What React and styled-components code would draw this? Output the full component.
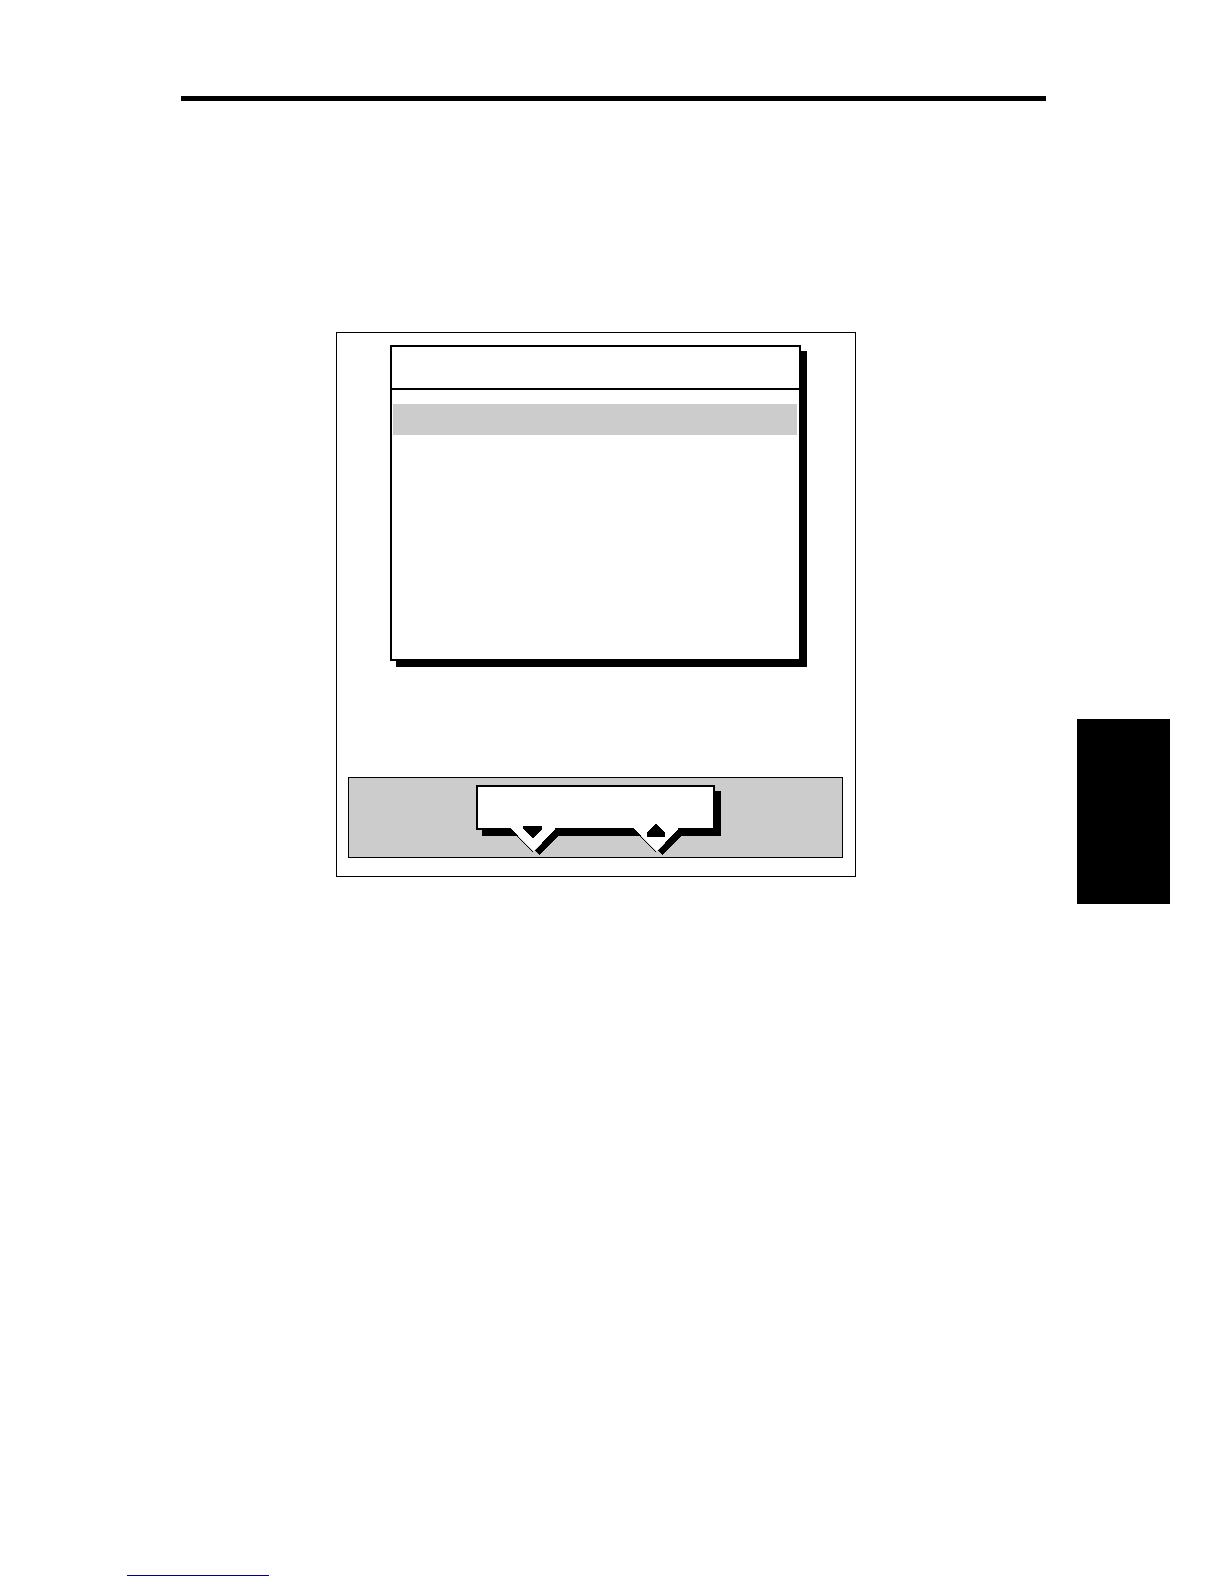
import styled, { createGlobalStyle } from "styled-components";

const rows = [1, 2, 3, 4, 5, 6, 7];

function KeyPointer({ direction, left }) {
	return (
		<PointerButton type="button" aria-label={direction} $left={left}>
			<svg width="50" height="32" shapeRendering="crispEdges" aria-hidden="true">
				<path d="M45 4 L51 4 L51 9 L29 31 L25 27 Z" fill="#000" />
				<path d="M0 4 H45 V5 L24 27 H23 Z" fill="#fff" />
				<path d="M7 12 L23 28" stroke="#000" fill="none" />
				{direction === "Down" ? (
					<path d="M13 2 H32 V5 L24 14 H22 L13 5 Z" fill="#000" />
				) : (
					<path d="M22 0 H24 L32 9 V13 H14 V9 Z" fill="#000" />
				)}
			</svg>
		</PointerButton>
	);
}

function App() {
	return (
		<Page>
			<GlobalStyle />
			<HeaderRule />

			<Content>
				<Panel>
					<MenuWindow>
						<MenuTitle />
						<MenuList>
							{rows.map((row) => (
								<MenuRow key={row} $selected={row === 1} />
							))}
						</MenuList>
					</MenuWindow>

					<KeyBar>
						<KeyLabel>
							<KeyPointer direction="Down" left={32} />
							<KeyPointer direction="Up" left={155} />
						</KeyLabel>
					</KeyBar>
				</Panel>

				<ChapterTab />
			</Content>

			<Footer>
				<FooterLink href="#contents" aria-label="Contents" />
			</Footer>
		</Page>
	);
}

export default App;

const GlobalStyle = createGlobalStyle`
	* {
		box-sizing: border-box;
	}

	body {
		margin: 0;
		background-color: white;
		font-family: "Liberation Sans", sans-serif;
	}
`;

const Page = styled.div`
	display: flex;
	flex-direction: column;
	min-height: 100vh;
	padding: 96px 54px 8px 127px;
`;

const HeaderRule = styled.hr`
	align-self: stretch;
	height: 5px;
	margin: 0 124px 0 54px;
	border: none;
	background-color: black;
`;

const Content = styled.main`
	display: flex;
	justify-content: space-between;
	align-items: flex-start;
	margin-top: 231px;
	padding-left: 209px;
`;

const Panel = styled.section`
	flex: 0 1 520px;
	padding: 12px 12px 18px 11px;
	border: 1px solid black;
`;

const MenuWindow = styled.div`
	margin: 0 42px 116px;
	border: 2px solid black;
	box-shadow: 6px 6px 0 black;
`;

const MenuTitle = styled.header`
	height: 43px;
	border-bottom: 2px solid black;
`;

const MenuList = styled.ul`
	margin: 0;
	padding: 14px 2px 10px 1px;
	list-style: none;
`;

const MenuRow = styled.li`
	height: 31px;
	margin-bottom: 4px;
	background-color: ${({ $selected }) => ($selected ? "#ccc" : "transparent")};
`;

const KeyBar = styled.div`
	display: flex;
	justify-content: center;
	padding: 7px 0 27px;
	border: 1px solid black;
	background-color: #ccc;
`;

const KeyLabel = styled.div`
	position: relative;
	width: 239px;
	height: 45px;
	border: 2px solid black;
	background-color: white;
	box-shadow: 6px 6px 0 black;
`;

/* hangs over the lower border of the label, down to the key beneath */
const PointerButton = styled.button`
	position: absolute;
	top: 37px;
	left: ${({ $left }) => $left}px;
	padding: 0;
	border: none;
	background: none;

	> svg {
		display: block;
	}
`;

const ChapterTab = styled.aside`
	flex: 0 0 93px;
	height: 185px;
	margin-top: 387px;
	background-color: black;
`;

const Footer = styled.footer`
	margin-top: auto;
`;

const FooterLink = styled.a`
	display: block;
	width: 142px;
	height: 16px;
	border-bottom: 1px solid #00008b;
`;
